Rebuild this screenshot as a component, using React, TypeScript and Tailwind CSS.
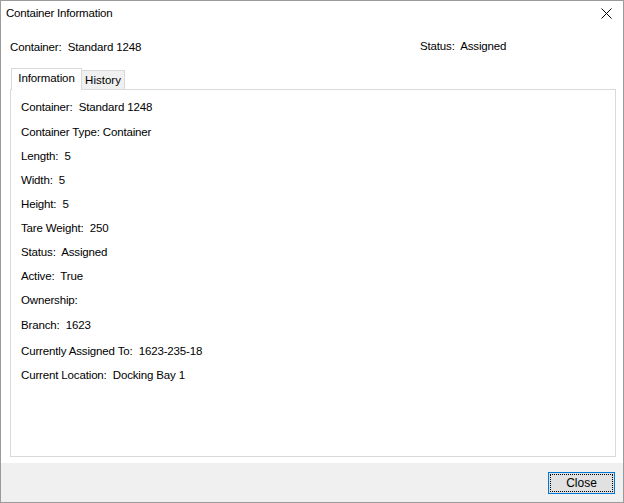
import * as React from "react";

const rows: { label: string; value: string; h: string }[] = [
  { label: "Container:", value: "Standard 1248", h: "h-[25px]" },
  { label: "Container Type:", value: "Container", h: "h-[25px]" },
  { label: "Length:", value: "5", h: "h-[24px]" },
  { label: "Width:", value: "5", h: "h-[24px]" },
  { label: "Height:", value: "5", h: "h-[24px]" },
  { label: "Tare Weight:", value: "250", h: "h-[24px]" },
  { label: "Status:", value: "Assigned", h: "h-[24px]" },
  { label: "Active:", value: "True", h: "h-[24px]" },
  { label: "Ownership:", value: "", h: "h-[24px]" },
  { label: "Branch:", value: "1623", h: "h-[26px]" },
  { label: "Currently Assigned To:", value: "1623-235-18", h: "h-[25px]" },
  { label: "Current Location:", value: "Docking Bay 1", h: "h-[24px]" },
];

function Field({ label, value, single }: { label: string; value: string; single?: boolean }) {
  return (
    <span className="whitespace-pre text-[11.5px] tracking-[-0.15px]">
      {label}
      {single ? " " : "  "}
      {value}
    </span>
  );
}

export default function App() {
  return (
    <div className="flex h-[503px] w-[624px] flex-col border border-[#9b9b9b] bg-white text-[12px] text-black [font-family:'Liberation_Sans',Arial,sans-serif]">
      {/* title bar */}
      <div className="flex h-[25px] items-center justify-between pl-[5px] pr-[11px]">
        <span className="text-[11.5px] tracking-[-0.2px]">Container Information</span>
        <svg width="11" height="11" viewBox="0 0 11 11" className="text-black">
          <path d="M0.5 0.5 L10.5 10.5 M10.5 0.5 L0.5 10.5" stroke="currentColor" strokeWidth="1" />
        </svg>
      </div>

      {/* header */}
      <div className="mt-[11px] flex h-[20px] items-center pl-[9px]">
        <div className="w-[410px]">
          <Field label="Container:" value="Standard 1248" />
        </div>
        <Field label="Status:" value="Assigned" />
      </div>

      {/* tabs */}
      <div className="ml-[10px] mt-[11px] flex h-[21px] items-end">
        <div className="relative z-10 -mb-px flex h-[22px] w-[71px] items-center justify-center border border-b-0 border-[#d9d9d9] bg-white pb-[2px] text-[11.5px] tracking-[-0.1px]">
          Information
        </div>
        <div className="flex h-[19px] w-[43px] items-center justify-center border border-l-0 border-b-0 border-[#d9d9d9] bg-[#f0f0f0] pt-[1px] text-[11.5px]">
          History
        </div>
      </div>

      {/* panel */}
      <div className="ml-[9px] flex h-[368px] w-[606px] flex-col border border-[#d9d9d9] pl-[10px] pt-[5px]">
        {rows.map((r) => (
          <div key={r.label} className={`flex items-center ${r.h}`}>
            <Field label={r.label} value={r.value} single={r.label === "Container Type:"} />
          </div>
        ))}
      </div>

      {/* footer */}
      <div className="mt-[6px] flex flex-1 items-start justify-end bg-[#f0f0f0] pr-[8px] pt-[9px]">
        <button className="flex h-[22px] w-[67px] items-center justify-center border border-[#0078d7] bg-[#e1e1e1] p-px">
          <span className="flex h-full w-full items-center justify-center border border-dotted border-black">
            Close
          </span>
        </button>
      </div>
    </div>
  );
}
